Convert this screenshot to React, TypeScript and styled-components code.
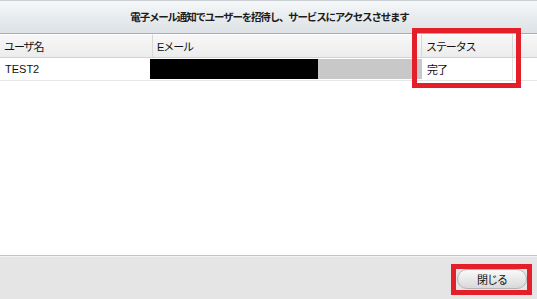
import React from "react";
import styled, { createGlobalStyle } from "styled-components";

const Global = createGlobalStyle`
  html, body { margin: 0; padding: 0; background: #ffffff; }
  body { font-family: "Liberation Sans", "Noto Sans CJK JP", sans-serif; }
  #root { width: 537px; height: 299px; }
`;

const Dialog = styled.div`
  position: relative;
  width: 537px;
  height: 299px;
  display: flex;
  flex-direction: column;
  background: #ffffff;
  overflow: hidden;
`;

const TitleBar = styled.div`
  height: 31px;
  flex: none;
  display: flex;
  align-items: center;
  justify-content: center;
  padding-bottom: 1px;
  background: linear-gradient(#f6f8f9, #e7ebee 55%, #dde2e6);
  border-bottom: 1px solid #a8aeb3;
  border-top: 1px solid #c9ced2;
`;

const Title = styled.span`
  font-family: "Noto Sans CJK JP", sans-serif;
  font-weight: 700;
  font-size: 10.5px;
  letter-spacing: -1.2px;
  color: #1c1c1c;
  margin-left: 2px;
`;

const Grid = styled.div`
  display: grid;
  grid-template-columns: 153px 269px 91px 1fr;
  flex: none;
`;

const HeadCell = styled.div<{ $last?: boolean }>`
  height: 23px;
  display: flex;
  align-items: center;
  padding-left: 4px;
  background: linear-gradient(#f7f7f7, #ececec);
  border-bottom: 1px solid #d2d2d2;
  border-right: ${(p) => (p.$last ? "none" : "1px solid #d8d8d8")};
  border-top: 1px solid #ffffff;
  box-sizing: border-box;
  height: 24px;
`;

const CellText = styled.span<{ $cjk?: boolean }>`
  font-family: "Liberation Sans", "Noto Sans CJK JP", sans-serif;
  font-size: 11px;
  color: #111111;
  letter-spacing: ${(p) => (p.$cjk ? "-1.1px" : "0")};
`;

const BodyCell = styled.div<{ $divider?: boolean }>`
  height: 23px;
  box-sizing: border-box;
  display: flex;
  align-items: center;
  padding-left: 5px;
  border-bottom: 1px solid #e6e6e6;
  border-right: ${(p) => (p.$divider ? "1px solid #e2e2e2" : "none")};
`;

const EmailCell = styled.div`
  height: 23px;
  box-sizing: border-box;
  display: flex;
  align-items: stretch;
  padding: 1px 0 1px 0;
  border-bottom: 1px solid #e6e6e6;
`;

const Redacted = styled.div`
  width: 168px;
  margin-left: -3px;
  background: #000000;
`;

const Masked = styled.div`
  flex: 1;
  background: #c8c8c8;
`;

const Empty = styled.div`
  flex: 1;
  background: #ffffff;
`;

const Footer = styled.div`
  height: 43px;
  flex: none;
  display: flex;
  align-items: center;
  justify-content: flex-end;
  padding-right: 10px;
  background: #e5e5e5;
  border-top: 1px solid #c4c4c4;
  box-shadow: inset 0 1px 0 #f4f4f4;
`;

const Button = styled.button`
  width: 70px;
  height: 20px;
  margin-top: 3px;
  border-radius: 10px;
  border: 1px solid #b4b4b4;
  background: linear-gradient(#fafafa, #e9e9e9 50%, #d9d9d9);
  font-family: "Noto Sans CJK JP", sans-serif;
  font-size: 11px;
  letter-spacing: -1px;
  color: #111111;
  padding: 0;
  display: flex;
  align-items: center;
  justify-content: center;
`;

const Highlight = styled.div<{ $x: number; $y: number; $w: number; $h: number }>`
  position: absolute;
  left: ${(p) => p.$x}px;
  top: ${(p) => p.$y}px;
  width: ${(p) => p.$w}px;
  height: ${(p) => p.$h}px;
  box-sizing: border-box;
  border: 5px solid #e3202a;
  pointer-events: none;
`;

export default function App() {
  return (
    <>
      <Global />
      <Dialog>
        <TitleBar>
          <Title>電子メール通知でユーザーを招待し、サービスにアクセスさせます</Title>
        </TitleBar>
        <Grid>
          <HeadCell>
            <CellText $cjk>ユーザ名</CellText>
          </HeadCell>
          <HeadCell>
            <CellText $cjk>Eメール</CellText>
          </HeadCell>
          <HeadCell>
            <CellText $cjk>ステータス</CellText>
          </HeadCell>
          <HeadCell $last />
          <BodyCell>
            <CellText>TEST2</CellText>
          </BodyCell>
          <EmailCell>
            <Redacted />
            <Masked />
          </EmailCell>
          <BodyCell $divider>
            <CellText $cjk>完了</CellText>
          </BodyCell>
          <BodyCell />
        </Grid>
        <Empty />
        <Footer>
          <Button>閉じる</Button>
        </Footer>
        <Highlight $x={412} $y={28} $w={109} $h={60} />
        <Highlight $x={451} $y={264} $w={81} $h={31} />
      </Dialog>
    </>
  );
}
